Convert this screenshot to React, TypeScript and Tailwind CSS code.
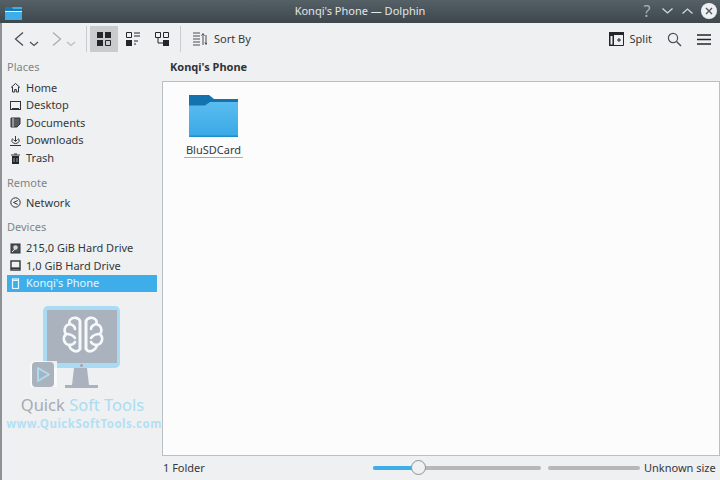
import React from "react";

const S = ({ children, w = 16, h = 16, vb = "0 0 16 16", className = "" }: { children: React.ReactNode; w?: number; h?: number; vb?: string; className?: string }) => (
  <svg width={w} height={h} viewBox={vb} fill="none" className={"shrink-0 " + className}>{children}</svg>
);

const ink = "#2f3438";

const PlaceRow = ({ icon, label, active }: { icon: React.ReactNode; label: string; active?: boolean }) => (
  <div className={"flex h-[17.6px] items-center gap-[5px] pl-[3px] text-[11px] " + (active ? "bg-[#3daee9] text-[#e8f6fd]" : "text-[#33383c]")}>
    <span className="flex w-[11px] justify-center">{icon}</span>
    <span>{label}</span>
  </div>
);

const Heading = ({ children, className = "" }: { children: React.ReactNode; className?: string }) => (
  <div className={"pl-[5px] text-[11px] text-[#7f8589] " + className}>{children}</div>
);

const icons = {
  home: <S w={11} h={11} vb="0 0 11 11"><path d="M1 5.500 5.500 1.500 10 5.500M2.500 5v5h2.200V7.500h1.600V10h2.200V5" stroke={ink} strokeWidth="1" /></S>,
  desktop: <S w={11} h={11} vb="0 0 11 11"><rect x=".5" y="1.500" width="10" height="8" stroke={ink} /><path d="M2 8.500h7" stroke={ink} /></S>,
  docs: <S w={11} h={11} vb="0 0 11 11"><path d="M1 1h9v6L7 10H1z" fill="#555b5f" stroke={ink} /><path d="M3 1v9" stroke="#cfd2d4" /></S>,
  dl: <S w={11} h={11} vb="0 0 11 11"><path d="M5.500 1v5M3.500 4.500l2 2 2-2M2.500 3.500a4 4 0 0 0-.5 3 4 4 0 0 0 7 0 4 4 0 0 0-.5-3M0 10.500h11" stroke={ink} /></S>,
  trash: <S w={11} h={11} vb="0 0 11 11"><path d="M2 3h7v8H2z" fill="#23272a" /><path d="M1 2h9M4 1h3" stroke={ink} /><path d="M4 5v4M7 5v4" stroke="#9aa0a3" /></S>,
  net: <S w={11} h={11} vb="0 0 11 11"><circle cx="5.500" cy="5.500" r="4.700" stroke={ink} /><path d="M7.800 3.500 3.500 5.500 7.800 7.500" stroke={ink} /></S>,
  hd: <S w={11} h={11} vb="0 0 11 11"><rect x="1" y="1" width="9" height="9" fill="#4a4f53" stroke={ink} /><circle cx="5.500" cy="4.500" r="2.200" fill="#d5d7d9" /><path d="M2 9l3-3" stroke="#e8e8e8" /></S>,
  hd2: <S w={11} h={11} vb="0 0 11 11"><rect x="1" y="1" width="9" height="9" stroke={ink} strokeWidth="1.400" /><path d="M1 8.200h9" stroke={ink} strokeWidth="1.600" /></S>,
  phone: <S w={11} h={11} vb="0 0 11 11"><rect x="2.500" y="1" width="6" height="9.500" stroke="#e8f6fd" strokeWidth="1.200" /><path d="M2.500 2.500h6" stroke="#e8f6fd" /></S>,
};

const ToolSep = () => <div className="h-[26px] w-px bg-[#c9cccf]" />;

function PlaceRowWrap({ children }: { children: React.ReactNode }) {
  return <div className="flex flex-col pl-[5px] pr-[5px]">{children}</div>;
}

export default function App() {
  return (
    <div className="relative flex h-[480px] w-[720px] flex-col overflow-hidden bg-[#eff0f1] font-['Noto_Sans',sans-serif]">
      {/* title bar */}
      <div className="relative flex h-[23px] shrink-0 items-center justify-center bg-gradient-to-b from-[#556067] to-[#3d474d] text-[11px] text-[#e4e6e7]">
        <S w={18} h={14} vb="0 0 18 14" className="absolute left-[5px] top-[6px]">
          <path d="M0 1h17v13H0z" fill="#3daee9" /><path d="M0 1h7l1 2h9v2H0z" fill="#1d78b0" /><path d="M0 5h17v1H0z" fill="#e3f4fc" />
        </S>
        <span>Konqi's Phone — Dolphin</span>
        <div className="absolute right-[3px] top-[2px] flex items-center gap-[7px]">
          <span className="w-[14px] text-center text-[16px] leading-[18px] text-[#aab1b5]">?</span>
          <S w={13} h={8} vb="0 0 13 8"><path d="M1.500 1.500 6.500 6 11.500 1.500" stroke="#d4d8da" strokeWidth="1.300" /></S>
          <S w={13} h={8} vb="0 0 13 8"><path d="M1.500 6.500 6.500 2 11.500 6.500" stroke="#d4d8da" strokeWidth="1.300" /></S>
          <span className="flex h-[16px] w-[16px] items-center justify-center rounded-full bg-[#eef0f1]">
            <S w={8} h={8} vb="0 0 8 8"><path d="M1 1l6 6M7 1 1 7" stroke="#4e585e" strokeWidth="1.400" /></S>
          </span>
        </div>
      </div>

      <div className="flex min-h-0 flex-1 border-l-2 border-[#8e9296]">
        {/* sidebar */}
        <div className="flex w-[160px] shrink-0 flex-col">
          <div className="h-[32px]" />
          <Heading className="mt-[4px] h-[20px]">Places</Heading>
          <PlaceRowWrap>
            <PlaceRow icon={icons.home} label="Home" />
            <PlaceRow icon={icons.desktop} label="Desktop" />
            <PlaceRow icon={icons.docs} label="Documents" />
            <PlaceRow icon={icons.dl} label="Downloads" />
            <PlaceRow icon={icons.trash} label="Trash" />
          </PlaceRowWrap>
          <Heading className="mt-[8px] h-[19px]">Remote</Heading>
          <PlaceRowWrap>
            <PlaceRow icon={icons.net} label="Network" />
          </PlaceRowWrap>
          <Heading className="mt-[7px] h-[21px]">Devices</Heading>
          <PlaceRowWrap>
            <PlaceRow icon={icons.hd} label="215,0 GiB Hard Drive" />
            <PlaceRow icon={icons.hd2} label="1,0 GiB Hard Drive" />
            <PlaceRow icon={icons.phone} label="Konqi's Phone" active />
          </PlaceRowWrap>
        </div>

        {/* main */}
        <div className="flex min-w-0 flex-1 flex-col">
          <div className="h-[32px] shrink-0" />
          <div className="flex h-[26px] shrink-0 items-center pb-[2px] pl-[8px] text-[11px] font-bold text-[#2f3438]">Konqi's Phone</div>
          <div className="flex-1 border border-[#bcbfc1] bg-[#fcfcfc] pl-[21px] pt-[13px]">
            <div className="flex w-[59px] flex-col items-center">
              <S w={49} h={42} vb="0 0 49 42">
                <defs>
                  <linearGradient id="fg" x1="0" y1="0" x2="0" y2="1">
                    <stop offset="0" stopColor="#5abcef" />
                    <stop offset="1" stopColor="#39a9e6" />
                  </linearGradient>
                </defs>
                <path d="M0 0h20l5 4h24v8H0z" fill="#1273ae" />
                <path d="M0 10.500h16l5-3.500h28v35H0z" fill="url(#fg)" />
                <path d="M0 40.500h49V42H0z" fill="#1e8fcb" />
              </S>
              <div className="mt-[5px] text-[11px] leading-[15px] text-[#33383c]">BluSDCard</div>
              <div className="h-px w-[59px] bg-[#7fb8d8]" />
            </div>
          </div>
          <div className="flex h-[24px] shrink-0 items-center text-[11px] text-[#33383c]">
            <span className="w-[211px] pl-[1px]">1 Folder</span>
            <div className="relative mr-[7px] h-[4px] w-[168px] rounded-full bg-[#b5b7b9]">
              <div className="h-full w-[46px] rounded-full bg-[#3daee9]" />
              <div className="absolute left-[38px] top-[-6px] h-[15px] w-[15px] rounded-full border border-[#8e9296] bg-[#eff0f1]" />
            </div>
            <div className="mr-[4px] h-[4px] w-[92px] rounded-full bg-[#b5b7b9]" />
            <span className="whitespace-nowrap">Unknown size</span>
          </div>
        </div>
      </div>

      {/* toolbar spans the top of both columns */}
      <div className="absolute left-[2px] right-0 top-[23px] flex h-[32px] items-center text-[11px] text-[#33383c]">
        <div className="ml-[10px] flex w-[72px] items-center">
          <S w={14} h={16} vb="0 0 14 16"><path d="M11 1.500 3.500 8 11 14.500" stroke="#4b5054" strokeWidth="1.300" /></S>
          <S w={10} h={6} vb="0 0 10 6" className="ml-[3px] mt-[9px]"><path d="M1 1l4 3.500L9 1" stroke="#4b5054" strokeWidth="1.200" /></S>
          <S w={14} h={16} vb="0 0 14 16" className="ml-[11px]"><path d="M3 1.500 10.500 8 3 14.500" stroke="#a9adb0" strokeWidth="1.300" /></S>
          <S w={10} h={6} vb="0 0 10 6" className="ml-[2px] mt-[9px]"><path d="M1 1l4 3.500L9 1" stroke="#b9bcbf" strokeWidth="1.200" /></S>
        </div>
        <div className="ml-[2px]"><ToolSep /></div>
        <div className="ml-[3px] flex h-[26px] w-[28px] items-center justify-center bg-[#c9cbcd]">
          <S w={14} h={14} vb="0 0 14 14"><path d="M0 0h6v6H0zM8 0h6v6H8zM0 8h6v6H0z" fill="#23272a" /><path d="M8.500 8.500h5v5h-5z" stroke="#23272a" /></S>
        </div>
        <div className="flex h-[26px] w-[30px] items-center justify-center">
          <S w={14} h={14} vb="0 0 14 14"><path d="M.5.5h5v5h-5z" stroke="#23272a" /><path d="M0 8h6v6H0z" fill="#23272a" /><path d="M8 1h6M8 4h6M8 9h4M8 12h2" stroke="#23272a" /></S>
        </div>
        <div className="flex h-[26px] w-[28px] items-center justify-center">
          <S w={14} h={14} vb="0 0 14 14"><path d="M.5.5h5v5h-5zM8.500.5h5v5h-5zM3 6v5h5" stroke="#23272a" /><path d="M8 8h6v6H8z" fill="#23272a" /></S>
        </div>
        <div className="ml-[4px]"><ToolSep /></div>
        <S w={14} h={14} vb="0 0 14 14" className="ml-[12px]"><path d="M0 1h7M0 4h7M0 7h7M0 10h7M0 13h7" stroke="#4b5054" /><path d="M10 2v11M8.500 3.500 10 1.500l1.500 2M13 3v9M11.800 10.500l1.200 2 1-2" stroke="#4b5054" /></S>
        <span className="ml-[7px]">Sort By</span>
        <div className="ml-auto flex items-center">
          <S w={15} h={14} vb="0 0 15 14"><path d="M.5.5h14v13H.5z" stroke="#23272a" /><path d="M0 0h15v3H0zM0 0h5v14H0z" fill="#23272a" /><path d="M1.500 4h2v8.500h-2z" fill="#eff0f1" /><path d="M8 8h4M10 6v4" stroke="#23272a" /></S>
          <span className="ml-[6px]">Split</span>
          <S w={15} h={15} vb="0 0 15 15" className="ml-[15px]"><circle cx="6" cy="6" r="4.600" stroke="#4b5054" strokeWidth="1.200" /><path d="M9.500 9.500l4.500 4.500" stroke="#4b5054" strokeWidth="1.400" /></S>
          <S w={14} h={11} vb="0 0 14 11" className="ml-[15px] mr-[9px]"><path d="M0 1h14M0 5.500h14M0 10h14" stroke="#23272a" strokeWidth="1.500" /></S>
        </div>
      </div>

      {/* translucent watermark over the sidebar */}
      <div className="pointer-events-none absolute left-0 top-[306px] flex w-[168px] flex-col items-center">
        <svg width="168" height="83" viewBox="0 0 168 83" fill="none" className="shrink-0">
          <rect x="43" y="0" width="77" height="62" rx="5" fill="#a9dcf3" />
          <rect x="47" y="4" width="70" height="53" fill="#aab3bd" />
          <circle cx="81.500" cy="59.500" r="1.200" fill="#e07b6b" />
          <path d="M74 62h13l2 17H72z" fill="#aab3bd" />
          <path d="M65 79h33v3H65z" fill="#aab3bd" />
          <path d="M30 60a5 5 0 0 1 5-5h22v26H30z" fill="#fbfcfd" opacity=".8" />
          <rect x="32" y="56" width="22" height="25" rx="4" fill="#aab3bd" />
          <path d="M38 62l11 6.500L38 75z" stroke="#a9dcf3" strokeWidth="2" strokeLinejoin="round" />
          <g stroke="#f7f8f9" strokeWidth="2.600" strokeLinecap="round" strokeLinejoin="round">
            <path d="M80 15c-1-3-7-5-10-1-1 2-1 3 0 4-5 1-7 6-4 10-4 4-2 10 3 11 1 5 8 9 11 4z" />
            <path d="M86 15c1-3 7-5 10-1 1 2 1 3 0 4 5 1 7 6 4 10 4 4 2 10-3 11-1 5-8 9-11 4z" />
            <path d="M80 15v28M86 15v28M70 18c3 1 5 3 5 5M96 18c-3 1-5 3-5 5M66 28c4 0 7 1 9 4M100 28c-4 0-7 1-9 4M69 39c3 0 5-1 6-3M97 39c-3 0-5-1-6-3" />
          </g>
        </svg>
        <div className="mr-[3px] mt-[5px] whitespace-nowrap text-[16.500px] leading-[22px]">
          <span className="text-[#a6abb3]">Quick </span><span className="text-[#a9dcf3]">Soft Tools</span>
        </div>
        <div className="whitespace-nowrap text-[11.500px] font-bold leading-[16px] tracking-[.5px] text-[#b3e0f5]">www.QuickSoftTools.com</div>
      </div>
    </div>
  );
}
